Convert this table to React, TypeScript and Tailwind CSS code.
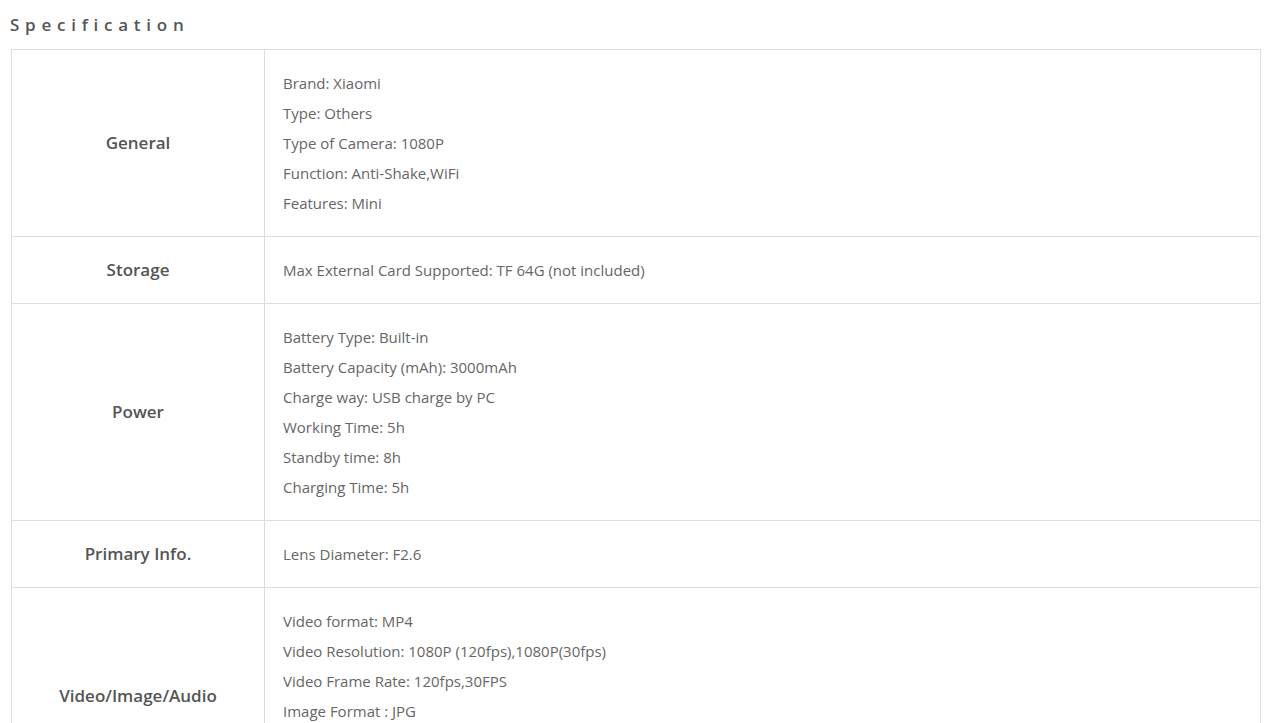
import React from "react";

const rows: { label: string; items: string[] }[] = [
  {
    label: "General",
    items: [
      "Brand: Xiaomi",
      "Type: Others",
      "Type of Camera: 1080P",
      "Function: Anti-Shake,WiFi",
      "Features: Mini",
    ],
  },
  { label: "Storage", items: ["Max External Card Supported: TF 64G (not included)"] },
  {
    label: "Power",
    items: [
      "Battery Type: Built-in",
      "Battery Capacity (mAh): 3000mAh",
      "Charge way: USB charge by PC",
      "Working Time: 5h",
      "Standby time: 8h",
      "Charging Time: 5h",
    ],
  },
  { label: "Primary Info.", items: ["Lens Diameter: F2.6"] },
  {
    label: "Video/Image/Audio",
    items: [
      "Video format: MP4",
      "Video Resolution: 1080P (120fps),1080P(30fps)",
      "Video Frame Rate: 120fps,30FPS",
      "Image Format : JPG",
      "Image resolution: 8MP",
      "Audio System: Built-in microphone",
    ],
  },
];

export default function App() {
  return (
    <div
      className="bg-white min-h-screen pl-[11px] pr-[12px]"
      style={{ fontFamily: '"Open Sans", "Liberation Sans", sans-serif' }}
    >
      <h2 className="pt-[12px] h-[49px] -ml-[1px] text-[17px] leading-[26px] font-semibold text-[#555] tracking-[5.75px]">
        Specification
      </h2>
      <table className="w-full border-collapse border border-[#ddd]">
        <tbody>
          {rows.map((r) => (
            <tr key={r.label} className="border-b border-[#ddd]">
              <td className="w-[253px] border-r border-[#ddd] text-center align-middle text-[17px] font-semibold text-[#555]">
                {r.label}
              </td>
              <td className="py-[18px] pl-[18px] text-[15px] leading-[30px] text-[#666]">
                {r.items.map((it) => (
                  <div key={it}>{it}</div>
                ))}
              </td>
            </tr>
          ))}
        </tbody>
      </table>
    </div>
  );
}
